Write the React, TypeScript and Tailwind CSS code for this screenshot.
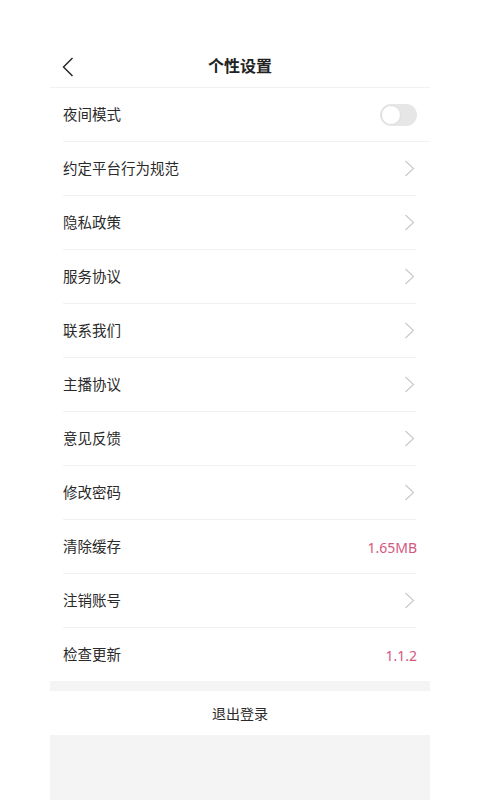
type Row = {
  label: string;
  value?: string;
  toggle?: boolean;
};

const rows: Row[] = [
  { label: "夜间模式", toggle: true },
  { label: "约定平台行为规范" },
  { label: "隐私政策" },
  { label: "服务协议" },
  { label: "联系我们" },
  { label: "主播协议" },
  { label: "意见反馈" },
  { label: "修改密码" },
  { label: "清除缓存", value: "1.65MB" },
  { label: "注销账号" },
  { label: "检查更新", value: "1.1.2" },
];

function Toggle() {
  return (
    <div className="flex h-[22px] w-[37px] items-center rounded-full bg-[#e6e6e6] p-px">
      <div className="h-[20px] w-[20px] rounded-full border border-[#dedede] bg-white" />
    </div>
  );
}

function Arrow() {
  return (
    <svg width="11" height="17" viewBox="0 0 11 17" fill="none" className="mr-[2px]">
      <path d="M1.5 1 L9.5 8.5 L1.5 16" stroke="#c8c8c8" strokeWidth="1.1" />
    </svg>
  );
}

function SettingRow({ row, index, last }: { row: Row; index: number; last: boolean }) {
  return (
    <div className="flex flex-col">
      <div className="flex h-[53px] items-center justify-between px-[13px]">
        <span className="pt-px text-[14.5px] text-[#2a2a2a]">{row.label}</span>
        {row.toggle ? (
          <Toggle />
        ) : row.value ? (
          <span className="pt-px text-[14px] text-[#d4587e]">{row.value}</span>
        ) : (
          <Arrow />
        )}
      </div>
      {!last && (
        <div className={index === 0 ? "ml-[13px] h-px bg-[#f2f2f2]" : "ml-[13px] mr-[14px] h-px bg-[#f2f2f2]"} />
      )}
    </div>
  );
}

export default function App() {
  return (
    <div
      className="flex h-[800px] w-full flex-col overflow-hidden bg-white"
      style={{ fontFamily: '"Noto Sans", "Noto Sans CJK SC", sans-serif' }}
    >
      <div className="mx-[50px] flex flex-1 flex-col">
        <div className="h-[44px]" />
        <div className="relative flex h-[44px] items-center justify-center border-b border-[#f2f2f2]">
          <svg
            width="12"
            height="20"
            viewBox="0 0 12 20"
            fill="none"
            className="absolute left-[12px] top-[13px]"
          >
            <path d="M10.5 1 L1.5 10 L10.5 19" stroke="#222222" strokeWidth="1.4" />
          </svg>
          <span className="text-[16px] font-bold text-[#222222]">个性设置</span>
        </div>
        {rows.map((row, i) => (
          <SettingRow key={row.label} row={row} index={i} last={i === rows.length - 1} />
        ))}
        <div className="h-[10px] bg-[#f4f4f4]" />
        <div className="flex h-[44px] items-center justify-center">
          <span className="text-[14px] text-[#2a2a2a]">退出登录</span>
        </div>
        <div className="flex-1 bg-[#f4f4f4]" />
      </div>
    </div>
  );
}
